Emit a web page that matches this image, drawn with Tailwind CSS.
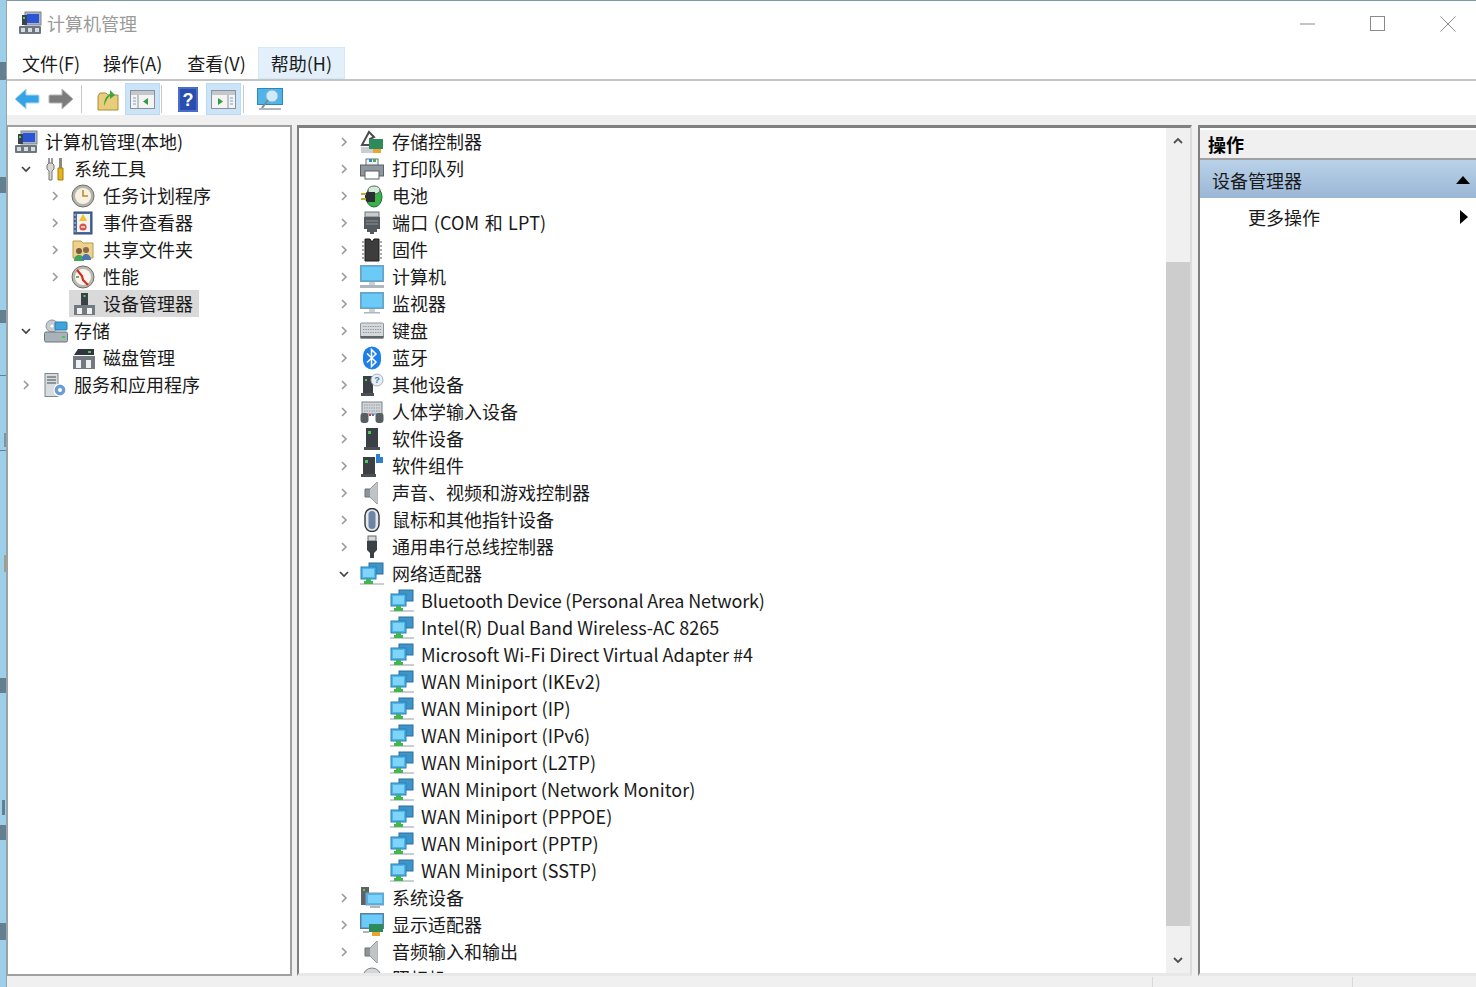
<!DOCTYPE html>
<html lang="zh-CN">
<head>
<meta charset="UTF-8">
<title>计算机管理</title>
<script src="https://cdn.jsdelivr.net/npm/@tailwindcss/browser@4"></script>
</head>
<body class="m-0 overflow-hidden bg-[#f0f0f0] text-[#1a1a1a] font-['Noto_Sans_CJK_SC','Noto_Sans',sans-serif]">

<!-- icon sprite -->
<svg class="hidden" xmlns="http://www.w3.org/2000/svg">
  <symbol id="chev-r" viewBox="0 0 10 12"><path d="M3 2l4 4-4 4" fill="none" stroke="#9a9a9a" stroke-width="1.6"/></symbol>
  <symbol id="chev-d" viewBox="0 0 12 10"><path d="M2 3l4 4 4-4" fill="none" stroke="#404040" stroke-width="1.7"/></symbol>
  <symbol id="net" viewBox="0 0 24 24">
    <rect x="9" y="1" width="14" height="11" fill="#3f94c8" stroke="#2a6f9e"/>
    <rect x="1" y="5" width="15" height="12" fill="#4db4ec" stroke="#2a7fb0"/>
    <rect x="3" y="7" width="11" height="8" fill="#7fd4fa"/>
    <rect x="0" y="21" width="24" height="2" fill="#c9ced2"/>
    <path d="M6 17h5v2h2v3H4v-3h2z" fill="#43b84a"/>
  </symbol>
  <symbol id="monitor" viewBox="0 0 24 24">
    <rect x="0.5" y="0.5" width="23" height="16" fill="#4fb4ea" stroke="#7f9db0"/>
    <rect x="2" y="2" width="20" height="13" fill="#6ccaf6"/>
    <path d="M9 17h6v3H9z" fill="#c8d0d6"/><rect x="4" y="20" width="16" height="1.5" fill="#aeb7bd"/>
  </symbol>
  <symbol id="computer" viewBox="0 0 24 24">
    <rect x="0.5" y="0.5" width="23" height="16" fill="#4fb4ea" stroke="#7f9db0"/>
    <rect x="2" y="2" width="20" height="13" fill="#6ccaf6"/>
    <path d="M9 17h6v3H9z" fill="#c8d0d6"/><rect x="0" y="20" width="24" height="3" fill="#aeb7bd"/>
  </symbol>
  <symbol id="mgmt" viewBox="0 0 24 24">
    <rect x="7" y="1" width="16" height="13" fill="#aab4bd" stroke="#7d8790"/>
    <rect x="9" y="3" width="12" height="9" fill="#2c55d6"/>
    <rect x="4" y="4" width="5" height="10" fill="#3a4450"/><rect x="5" y="6" width="2" height="2" fill="#4fd05a"/>
    <rect x="1" y="15" width="22" height="8" rx="1" fill="#6e7780"/>
    <rect x="3" y="17" width="4" height="4" fill="#d7dce0"/><rect x="10" y="17" width="4" height="4" fill="#d7dce0"/><rect x="17" y="17" width="4" height="4" fill="#d7dce0"/>
  </symbol>
  <symbol id="tools" viewBox="0 0 24 24">
    <path d="M5 1v5l-2 2v4l2 2v9h3V14l2-2V8L8 6V1v5H5z" fill="#d6d6d2" stroke="#777"/>
    <rect x="15" y="1" width="3" height="11" fill="#8a8a84"/>
    <path d="M14 11h5v12h-5z" fill="#e8b41c" stroke="#a67c0c"/>
  </symbol>
  <symbol id="clock" viewBox="0 0 24 24">
    <circle cx="12" cy="12" r="11" fill="#b4b4ac" stroke="#6f6f68"/>
    <circle cx="12" cy="12" r="8" fill="#f6f1e2"/>
    <path d="M12 6v6h5" fill="none" stroke="#c08a2a" stroke-width="1.6"/>
  </symbol>
  <symbol id="event" viewBox="0 0 24 24">
    <rect x="3" y="1" width="18" height="22" fill="#4a6a9c" stroke="#314a74"/>
    <rect x="6" y="3" width="13" height="18" fill="#f4f4f0"/>
    <path d="M12 3l4 7H8z" fill="#eec22a"/>
    <circle cx="12" cy="16" r="3.6" fill="#d9534f"/><rect x="10" y="15.4" width="4" height="1.2" fill="#fff"/>
    <path d="M3 4h2M3 8h2M3 12h2M3 16h2M3 20h2" stroke="#c8d0dc"/>
  </symbol>
  <symbol id="share" viewBox="0 0 24 24">
    <path d="M2 3h8l2 2h10v15H2z" fill="#ecd28c" stroke="#b99a4e"/>
    <circle cx="8" cy="13" r="3" fill="#7a5a3a"/><path d="M3 23c0-4 2-6 5-6s5 2 5 6z" fill="#3fa35a"/>
    <circle cx="15" cy="12" r="3" fill="#8a6a4a"/><path d="M11 22c0-4 2-6 4-6s5 2 5 6z" fill="#4676b6"/>
  </symbol>
  <symbol id="perf" viewBox="0 0 24 24">
    <circle cx="12" cy="12" r="11" fill="#b9b9b2" stroke="#6f6f68"/>
    <circle cx="12" cy="12" r="8" fill="#f8f6ee"/>
    <path d="M6 5l5 6 1 4 5 5" fill="none" stroke="#d62a20" stroke-width="2.2"/>
    <path d="M5 12h3" stroke="#3c9a4c" stroke-width="1.5"/>
  </symbol>
  <symbol id="devmgr" viewBox="0 0 24 24">
    <rect x="9" y="1" width="7" height="12" fill="#3b4148"/><rect x="11.5" y="3" width="2" height="2" fill="#43d053"/>
    <rect x="2" y="13" width="21" height="10" fill="#72797f"/>
    <rect x="5" y="16" width="5" height="6" fill="#eef0f2"/><rect x="15" y="16" width="5" height="6" fill="#eef0f2"/>
  </symbol>
  <symbol id="storage" viewBox="0 0 24 24">
    <circle cx="8" cy="7" r="6" fill="#c6cbcf" stroke="#8e959a"/><circle cx="8" cy="7" r="1.6" fill="#fff"/>
    <rect x="11" y="3" width="12" height="8" rx="1" fill="#3fa4dc" stroke="#2878a8"/>
    <rect x="0.5" y="13" width="23" height="10" rx="1.5" fill="#a9b2b8" stroke="#6d767c"/>
    <rect x="18" y="17" width="3" height="2" fill="#43c84f"/>
  </symbol>
  <symbol id="disk" viewBox="0 0 24 24">
    <path d="M6 3h16v6H2z" fill="#30363c"/><rect x="16" y="5" width="3" height="2" fill="#43d053"/>
    <rect x="1" y="10" width="22" height="13" fill="#72797f"/>
    <rect x="4" y="14" width="5" height="8" fill="#eef0f2"/><rect x="14" y="14" width="5" height="8" fill="#eef0f2"/>
  </symbol>
  <symbol id="services" viewBox="0 0 24 24">
    <rect x="2" y="0.5" width="13" height="23" fill="#d8dcdf" stroke="#7f878c"/>
    <path d="M4 4h9M4 7h9M4 10h9" stroke="#767e84" stroke-width="1.4"/>
    <circle cx="17" cy="17" r="6" fill="#6a9ed4" stroke="#fff" stroke-width="1.2"/><circle cx="17" cy="17" r="2" fill="#fff"/>
  </symbol>
  <symbol id="storctl" viewBox="0 0 24 24">
    <path d="M2 15L9 2l5 5-4 2 1 6z" fill="none" stroke="#4d4d4d" stroke-width="2"/>
    <rect x="1" y="17" width="14" height="6" fill="#c9ced2"/>
    <rect x="9" y="9" width="14" height="10" fill="#2e8a5a"/><rect x="13" y="19" width="8" height="4" fill="#e8a62c"/>
  </symbol>
  <symbol id="printer" viewBox="0 0 24 24">
    <rect x="6" y="2" width="12" height="7" fill="#f3f3f3" stroke="#6a7177"/>
    <rect x="9" y="2" width="3" height="3" fill="#2f86d8"/><rect x="13" y="2" width="3" height="3" fill="#45b24d"/>
    <rect x="0.5" y="8" width="23" height="11" fill="#8e979d" stroke="#5b6369"/>
    <rect x="5" y="14" width="14" height="8" fill="#fff" stroke="#5b6369"/>
  </symbol>
  <symbol id="battery" viewBox="0 0 24 24">
    <ellipse cx="14" cy="13" rx="8" ry="10" fill="#38b24a" stroke="#1e6b2c"/>
    <ellipse cx="14" cy="6" rx="6" ry="4" fill="#d5e9d8" stroke="#53705a"/>
    <path d="M9 8h6v10H9c-3 0-4-2-4-5s1-5 4-5z" fill="#2a2f33"/>
    <path d="M1 10h5M1 15h5" stroke="#c8a82a" stroke-width="2"/>
  </symbol>
  <symbol id="port" viewBox="0 0 24 24">
    <rect x="5" y="1" width="14" height="5" fill="#c6cbcf" stroke="#6e7479"/>
    <path d="M4 6h16v12h-3v3h-3v2h-4v-2H7v-3H4z" fill="#545a5f"/>
    <path d="M6 10h12M6 13h12" stroke="#8c9398"/>
  </symbol>
  <symbol id="chip" viewBox="0 0 24 24">
    <path d="M5 1h5l2 3 2-3h5v22H5z" fill="#3d3d3d" stroke="#1d1d1d"/>
    <path d="M2 4h3M2 8h3M2 12h3M2 16h3M2 20h3M19 4h3M19 8h3M19 12h3M19 16h3M19 20h3" stroke="#8f8f8f" stroke-width="1.6"/>
  </symbol>
  <symbol id="keyboard" viewBox="0 0 24 24">
    <rect x="0.5" y="4" width="23" height="15" rx="1" fill="#d5d9dc" stroke="#8d959a"/>
    <path d="M3 7.5h18M3 10.5h18M3 13.5h18" stroke="#8f979d" stroke-dasharray="1.4 1"/>
    <rect x="0.5" y="17" width="23" height="2.5" fill="#5d6468"/>
  </symbol>
  <symbol id="bt" viewBox="0 0 24 24">
    <rect x="3" y="0.5" width="18" height="23" rx="9" fill="#1e7fe8"/>
    <path d="M7 7.5l9 8.5-4.5 4.5v-17L16 8l-9 8.5" fill="none" stroke="#fff" stroke-width="1.5"/>
  </symbol>
  <symbol id="other" viewBox="0 0 24 24">
    <rect x="3" y="3" width="10" height="17" fill="#3a4046"/><rect x="5" y="6" width="2" height="2" fill="#43d053"/>
    <rect x="1" y="20" width="13" height="3" fill="#4a5056"/>
    <circle cx="17" cy="7" r="6" fill="#e7eef4" stroke="#a7b2ba"/>
    <text x="17" y="10" font-size="9" font-weight="700" text-anchor="middle" fill="#3d7cc0" font-family="Liberation Sans">?</text>
  </symbol>
  <symbol id="hid" viewBox="0 0 24 24">
    <rect x="2" y="2" width="20" height="12" fill="#d0d5d9" stroke="#7c848a"/>
    <path d="M4 5h16M4 8h16M4 11h16" stroke="#8f979d" stroke-dasharray="1.4 1"/>
    <rect x="0.5" y="13" width="8" height="10" rx="3" fill="#565d63"/>
    <rect x="15.5" y="13" width="8" height="10" rx="3" fill="#565d63"/>
    <rect x="9" y="14" width="2" height="2" fill="#d8382e"/><rect x="12" y="14" width="2" height="2" fill="#3a7fd0"/>
  </symbol>
  <symbol id="softdev" viewBox="0 0 24 24">
    <rect x="6" y="1" width="12" height="19" fill="#3a4046"/><rect x="8" y="4" width="3" height="3" fill="#43d053"/>
    <rect x="4" y="20" width="16" height="3" fill="#4a5056"/>
  </symbol>
  <symbol id="softcomp" viewBox="0 0 24 24">
    <rect x="3" y="3" width="12" height="17" fill="#3a4046"/><rect x="5" y="6" width="3" height="3" fill="#43d053"/>
    <rect x="1" y="20" width="15" height="3" fill="#4a5056"/>
    <path d="M16 0h4v3h3v6h-7z" fill="#2f7fd0"/>
  </symbol>
  <symbol id="speaker" viewBox="0 0 24 24">
    <path d="M5 8h5l7-7v22l-7-7H5z" fill="#8f9498" stroke="#6b7175"/>
    <path d="M10 8l7-7v22l-7-7z" fill="#c0c4c7"/>
  </symbol>
  <symbol id="mouse" viewBox="0 0 24 24">
    <rect x="5" y="0.5" width="14" height="23" rx="7" fill="#e6e8ea" stroke="#2f3438" stroke-width="1.4"/>
    <rect x="8.5" y="3" width="7" height="18" rx="3.5" fill="#6d84a4"/>
  </symbol>
  <symbol id="usb" viewBox="0 0 24 24">
    <rect x="8" y="1" width="8" height="5" fill="#d5d8da" stroke="#666"/>
    <path d="M7 6h10v9l-3 3v5h-4v-5l-3-3z" fill="#3c4145"/>
  </symbol>
  <symbol id="system" viewBox="0 0 24 24">
    <rect x="1" y="1" width="8" height="18" fill="#5c6268"/><rect x="3" y="3" width="2" height="2" fill="#43d053"/>
    <rect x="6" y="7" width="18" height="12" fill="#4fb4ea" stroke="#7f9db0"/>
    <rect x="8" y="9" width="14" height="8" fill="#7ad2f8"/>
    <rect x="10" y="20" width="10" height="2" fill="#aeb7bd"/>
  </symbol>
  <symbol id="display" viewBox="0 0 24 24">
    <rect x="0.5" y="0.5" width="23" height="15" fill="#4fa8de" stroke="#5d7f95"/>
    <rect x="2" y="2" width="20" height="12" fill="#6ccaf6"/>
    <rect x="9" y="11" width="14" height="8" fill="#2e8a5a"/><rect x="12" y="19" width="8" height="4" fill="#e8a62c"/>
    <rect x="3" y="18" width="6" height="2" fill="#aeb7bd"/>
  </symbol>
  <symbol id="camera" viewBox="0 0 24 24">
    <circle cx="12" cy="10" r="9" fill="#d4d7d9" stroke="#7d8488"/>
    <circle cx="12" cy="10" r="4" fill="#4a5056"/>
  </symbol>
</svg>

<div class="relative flex h-[987px] w-[1476px] overflow-hidden">
  <!-- desktop peeking out on the left -->
  <div class="relative w-[7px] shrink-0 border-r border-[#8ea6b4] bg-[#9dcfe8]">
    <span class="absolute left-0 top-[62px] h-[18px] w-[6px] bg-[#3c4a55]/60"></span>
    <span class="absolute left-0 top-[177px] h-[16px] w-[6px] bg-[#3c4a55]/60"></span>
    <span class="absolute left-0 top-[310px] h-[13px] w-[6px] bg-[#3c4a55]/60"></span>
    <span class="absolute left-0 top-[375px] h-[1px] w-[6px] bg-[#3c4a55]/60"></span>
    <span class="absolute left-[4px] top-[433px] h-[14px] w-[2px] bg-[#6a7a88]/70"></span>
    <span class="absolute left-0 top-[450px] h-[1px] w-[6px] bg-[#3c4a55]/60"></span>
    <span class="absolute left-[4px] top-[555px] h-[17px] w-[2px] bg-[#a08a5a]/70"></span>
    <span class="absolute left-0 top-[678px] h-[15px] w-[6px] bg-[#3c4a55]/60"></span>
    <span class="absolute left-[2px] top-[800px] h-[15px] w-[3px] bg-[#3c4a55]/60"></span>
    <span class="absolute left-0 top-[825px] h-[15px] w-[6px] bg-[#3c4a55]/60"></span>
    <span class="absolute left-0 top-[923px] h-[17px] w-[6px] bg-[#3c4a55]/60"></span>
  </div>

  <div class="flex min-w-0 flex-1 flex-col border-t border-[#7b9aa5] bg-[#f0f0f0]">
    <!-- title bar -->
    <div class="flex h-[46px] shrink-0 items-center bg-white pl-[11px]">
      <svg class="mb-[2px] h-[24px] w-[24px]"><use href="#mgmt"/></svg>
      <span class="mb-[3px] ml-[5px] text-[18px] leading-none text-[#9a9a9a]">计算机管理</span>
      <div class="ml-auto flex items-center">
        <svg class="h-[16px] w-[16px]" viewBox="0 0 16 16"><path d="M0 8h15" stroke="#8a8a8a"/></svg>
        <svg class="ml-[54px] h-[16px] w-[16px]" viewBox="0 0 16 16"><rect x="0.5" y="0.5" width="14" height="14" fill="none" stroke="#8a8a8a"/></svg>
        <svg class="ml-[54px] mr-[20px] h-[16px] w-[16px]" viewBox="0 0 16 16"><path d="M0.5 0.5l15 15M15.5 0.5l-15 15" stroke="#8a8a8a"/></svg>
      </div>
    </div>
    <!-- menu bar -->
    <div class="flex h-[34px] shrink-0 items-stretch border-b-2 border-[#c4c4c4] bg-white pl-[3px] text-[18px]">
      <span class="flex items-center px-[12px]">文件(F)</span>
      <span class="flex items-center pl-[11px] pr-[13px]">操作(A)</span>
      <span class="flex items-center px-[12px]">查看(V)</span>
      <span class="flex items-center border border-[#d5e8f8] bg-[#e3f0fb] px-[12px]">帮助(H)</span>
    </div>
    <!-- toolbar -->
    <div class="flex h-[34px] shrink-0 items-center bg-white pl-[7px] pt-[2px]">
      <svg class="h-[26px] w-[26px]" viewBox="0 0 26 26"><path d="M1 13L12 3v6h12c1 0 1 1 1 1v6s0 1-1 1H12v6z" fill="#36a3e6" stroke="#a9d6f2"/></svg>
      <svg class="ml-[8px] h-[26px] w-[26px]" viewBox="0 0 26 26"><path d="M25 13L14 3v6H2c-1 0-1 1-1 1v6s0 1 1 1h12v6z" fill="#7c7c7c" stroke="#b5b5b5"/></svg>
      <span class="ml-[7px] h-[28px] w-[1px] bg-[#c8c8c8]"></span>
      <svg class="ml-[15px] h-[24px] w-[22px]" viewBox="0 0 22 24"><path d="M1 9l2-3h6l2 2h10v15H1z" fill="#e8cd7a" stroke="#a88c3c"/><path d="M7 19c0-6 2-10 6-12V3l5 5-5 4V9c-2 1-4 5-6 10z" fill="#3da73f"/></svg>
      <span class="ml-[6px] flex h-[32px] w-[35px] items-center justify-center border border-[#b8dcf8] bg-[#cce4f7]">
        <svg class="h-[19px] w-[25px]" viewBox="0 0 25 19"><rect x="0.5" y="0.5" width="24" height="18" fill="#f4f4f4" stroke="#8a9298"/><rect x="1" y="1" width="23" height="4" fill="#c2c8cc"/><path d="M8 5v13" stroke="#8a9298"/><path d="M3 8h3M3 11h3M3 14h3" stroke="#7a9ccc"/><path d="M18 8v7l-5-3.5z" fill="#2f9f3f"/></svg>
      </span>
      <span class="ml-[1px] h-[28px] w-[1px] bg-[#c8c8c8]"></span>
      <svg class="ml-[16px] h-[25px] w-[20px]" viewBox="0 0 20 25"><rect width="20" height="25" fill="#2a4db0"/><rect x="1" y="1" width="18" height="23" fill="none" stroke="#6e8ce0"/><text x="10" y="19" text-anchor="middle" font-size="18" font-weight="700" fill="#fff" font-family="Liberation Sans">?</text></svg>
      <span class="ml-[8px] flex h-[32px] w-[35px] items-center justify-center border border-[#b8dcf8] bg-[#cce4f7]">
        <svg class="h-[19px] w-[25px]" viewBox="0 0 25 19"><rect x="0.5" y="0.5" width="24" height="18" fill="#f4f4f4" stroke="#8a9298"/><rect x="1" y="1" width="23" height="4" fill="#c2c8cc"/><path d="M17 5v13" stroke="#8a9298"/><path d="M19 8h3M19 11h3M19 14h3" stroke="#7a9ccc"/><path d="M7 8v7l5-3.5z" fill="#2f9f3f"/></svg>
      </span>
      <span class="ml-[2px] h-[28px] w-[1px] bg-[#c8c8c8]"></span>
      <svg class="ml-[13px] h-[23px] w-[26px]" viewBox="0 0 26 23"><rect x="0.5" y="0.5" width="25" height="16" fill="#4fb4ea" stroke="#2f86b8"/><circle cx="15" cy="8" r="6" fill="#cfeaf8" stroke="#8fb4c8"/><path d="M11 12l-6 8" stroke="#7a8a94" stroke-width="2"/><rect x="2" y="20" width="22" height="2" fill="#aeb7bd"/></svg>
    </div>

    <!-- panes -->
    <div class="mt-[10px] flex h-[851px] shrink-0 items-stretch">
      <!-- left tree -->
      <div class="w-[285px] shrink-0 overflow-hidden border-t-2 border-r-2 border-b-2 border-l border-[#a0a0a0] bg-white pt-[1px] text-[18px]">
        <div class="flex h-[27px] items-center pl-[6px]"><svg class="h-[24px] w-[24px]"><use href="#mgmt"/></svg><span class="ml-[7px]">计算机管理(本地)</span></div>
        <div class="flex h-[27px] items-center pl-[12px]"><svg class="h-[10px] w-[12px]"><use href="#chev-d"/></svg><svg class="ml-[12px] h-[24px] w-[24px]"><use href="#tools"/></svg><span class="ml-[6px]">系统工具</span></div>
        <div class="flex h-[27px] items-center pl-[42px]"><svg class="h-[12px] w-[10px]"><use href="#chev-r"/></svg><svg class="ml-[11px] h-[24px] w-[24px]"><use href="#clock"/></svg><span class="ml-[8px]">任务计划程序</span></div>
        <div class="flex h-[27px] items-center pl-[42px]"><svg class="h-[12px] w-[10px]"><use href="#chev-r"/></svg><svg class="ml-[11px] h-[24px] w-[24px]"><use href="#event"/></svg><span class="ml-[8px]">事件查看器</span></div>
        <div class="flex h-[27px] items-center pl-[42px]"><svg class="h-[12px] w-[10px]"><use href="#chev-r"/></svg><svg class="ml-[11px] h-[24px] w-[24px]"><use href="#share"/></svg><span class="ml-[8px]">共享文件夹</span></div>
        <div class="flex h-[27px] items-center pl-[42px]"><svg class="h-[12px] w-[10px]"><use href="#chev-r"/></svg><svg class="ml-[11px] h-[24px] w-[24px]"><use href="#perf"/></svg><span class="ml-[8px]">性能</span></div>
        <div class="flex h-[27px] items-center pl-[61px]"><span class="flex h-[27px] w-[130px] items-center bg-[#d9d9d9] pl-[3px]"><svg class="h-[24px] w-[24px]"><use href="#devmgr"/></svg><span class="ml-[7px]">设备管理器</span></span></div>
        <div class="flex h-[27px] items-center pl-[12px]"><svg class="h-[10px] w-[12px]"><use href="#chev-d"/></svg><svg class="ml-[12px] h-[24px] w-[24px]"><use href="#storage"/></svg><span class="ml-[6px]">存储</span></div>
        <div class="flex h-[27px] items-center pl-[64px]"><svg class="h-[24px] w-[24px]"><use href="#disk"/></svg><span class="ml-[7px]">磁盘管理</span></div>
        <div class="flex h-[27px] items-center pl-[13px]"><svg class="h-[12px] w-[10px]"><use href="#chev-r"/></svg><svg class="ml-[12px] h-[24px] w-[24px]"><use href="#services"/></svg><span class="ml-[7px]">服务和应用程序</span></div>
      </div>

      <!-- device tree -->
      <div class="ml-[5px] flex w-[895px] shrink-0 overflow-hidden border-t-[3px] border-l-2 border-[#808080] border-r-[#dcdcdc] border-b-[#e8e8e8] border-r-2 border-b-[3px]">
        <div class="min-w-0 flex-1 overflow-hidden bg-white text-[18px]">
          <div class="flex h-[27px] items-center pl-[40px]"><svg class="h-[12px] w-[10px]"><use href="#chev-r"/></svg><svg class="ml-[11px] h-[24px] w-[24px]"><use href="#storctl"/></svg><span class="ml-[8px]">存储控制器</span></div>
          <div class="flex h-[27px] items-center pl-[40px]"><svg class="h-[12px] w-[10px]"><use href="#chev-r"/></svg><svg class="ml-[11px] h-[24px] w-[24px]"><use href="#printer"/></svg><span class="ml-[8px]">打印队列</span></div>
          <div class="flex h-[27px] items-center pl-[40px]"><svg class="h-[12px] w-[10px]"><use href="#chev-r"/></svg><svg class="ml-[11px] h-[24px] w-[24px]"><use href="#battery"/></svg><span class="ml-[8px]">电池</span></div>
          <div class="flex h-[27px] items-center pl-[40px]"><svg class="h-[12px] w-[10px]"><use href="#chev-r"/></svg><svg class="ml-[11px] h-[24px] w-[24px]"><use href="#port"/></svg><span class="ml-[8px] [word-spacing:1px] tracking-[0.2px]">端口 (COM 和 LPT)</span></div>
          <div class="flex h-[27px] items-center pl-[40px]"><svg class="h-[12px] w-[10px]"><use href="#chev-r"/></svg><svg class="ml-[11px] h-[24px] w-[24px]"><use href="#chip"/></svg><span class="ml-[8px]">固件</span></div>
          <div class="flex h-[27px] items-center pl-[40px]"><svg class="h-[12px] w-[10px]"><use href="#chev-r"/></svg><svg class="ml-[11px] h-[24px] w-[24px]"><use href="#computer"/></svg><span class="ml-[8px]">计算机</span></div>
          <div class="flex h-[27px] items-center pl-[40px]"><svg class="h-[12px] w-[10px]"><use href="#chev-r"/></svg><svg class="ml-[11px] h-[24px] w-[24px]"><use href="#monitor"/></svg><span class="ml-[8px]">监视器</span></div>
          <div class="flex h-[27px] items-center pl-[40px]"><svg class="h-[12px] w-[10px]"><use href="#chev-r"/></svg><svg class="ml-[11px] h-[24px] w-[24px]"><use href="#keyboard"/></svg><span class="ml-[8px]">键盘</span></div>
          <div class="flex h-[27px] items-center pl-[40px]"><svg class="h-[12px] w-[10px]"><use href="#chev-r"/></svg><svg class="ml-[11px] h-[24px] w-[24px]"><use href="#bt"/></svg><span class="ml-[8px]">蓝牙</span></div>
          <div class="flex h-[27px] items-center pl-[40px]"><svg class="h-[12px] w-[10px]"><use href="#chev-r"/></svg><svg class="ml-[11px] h-[24px] w-[24px]"><use href="#other"/></svg><span class="ml-[8px]">其他设备</span></div>
          <div class="flex h-[27px] items-center pl-[40px]"><svg class="h-[12px] w-[10px]"><use href="#chev-r"/></svg><svg class="ml-[11px] h-[24px] w-[24px]"><use href="#hid"/></svg><span class="ml-[8px]">人体学输入设备</span></div>
          <div class="flex h-[27px] items-center pl-[40px]"><svg class="h-[12px] w-[10px]"><use href="#chev-r"/></svg><svg class="ml-[11px] h-[24px] w-[24px]"><use href="#softdev"/></svg><span class="ml-[8px]">软件设备</span></div>
          <div class="flex h-[27px] items-center pl-[40px]"><svg class="h-[12px] w-[10px]"><use href="#chev-r"/></svg><svg class="ml-[11px] h-[24px] w-[24px]"><use href="#softcomp"/></svg><span class="ml-[8px]">软件组件</span></div>
          <div class="flex h-[27px] items-center pl-[40px]"><svg class="h-[12px] w-[10px]"><use href="#chev-r"/></svg><svg class="ml-[11px] h-[24px] w-[24px]"><use href="#speaker"/></svg><span class="ml-[8px]">声音、视频和游戏控制器</span></div>
          <div class="flex h-[27px] items-center pl-[40px]"><svg class="h-[12px] w-[10px]"><use href="#chev-r"/></svg><svg class="ml-[11px] h-[24px] w-[24px]"><use href="#mouse"/></svg><span class="ml-[8px]">鼠标和其他指针设备</span></div>
          <div class="flex h-[27px] items-center pl-[40px]"><svg class="h-[12px] w-[10px]"><use href="#chev-r"/></svg><svg class="ml-[11px] h-[24px] w-[24px]"><use href="#usb"/></svg><span class="ml-[8px]">通用串行总线控制器</span></div>
          <div class="flex h-[27px] items-center pl-[39px]"><svg class="h-[10px] w-[12px]"><use href="#chev-d"/></svg><svg class="ml-[10px] h-[24px] w-[24px]"><use href="#net"/></svg><span class="ml-[8px]">网络适配器</span></div>
          <div class="flex h-[27px] items-center pl-[91px]"><svg class="h-[24px] w-[24px]"><use href="#net"/></svg><span class="ml-[7px] tracking-[-0.15px]">Bluetooth Device (Personal Area Network)</span></div>
          <div class="flex h-[27px] items-center pl-[91px]"><svg class="h-[24px] w-[24px]"><use href="#net"/></svg><span class="ml-[7px]">Intel(R) Dual Band Wireless-AC 8265</span></div>
          <div class="flex h-[27px] items-center pl-[91px]"><svg class="h-[24px] w-[24px]"><use href="#net"/></svg><span class="ml-[7px]">Microsoft Wi-Fi Direct Virtual Adapter #4</span></div>
          <div class="flex h-[27px] items-center pl-[91px]"><svg class="h-[24px] w-[24px]"><use href="#net"/></svg><span class="ml-[7px] tracking-[0.1px]">WAN Miniport (IKEv2)</span></div>
          <div class="flex h-[27px] items-center pl-[91px]"><svg class="h-[24px] w-[24px]"><use href="#net"/></svg><span class="ml-[7px] tracking-[0.1px]">WAN Miniport (IP)</span></div>
          <div class="flex h-[27px] items-center pl-[91px]"><svg class="h-[24px] w-[24px]"><use href="#net"/></svg><span class="ml-[7px] tracking-[0.1px]">WAN Miniport (IPv6)</span></div>
          <div class="flex h-[27px] items-center pl-[91px]"><svg class="h-[24px] w-[24px]"><use href="#net"/></svg><span class="ml-[7px] tracking-[0.1px]">WAN Miniport (L2TP)</span></div>
          <div class="flex h-[27px] items-center pl-[91px]"><svg class="h-[24px] w-[24px]"><use href="#net"/></svg><span class="ml-[7px] tracking-[0.05px]">WAN Miniport (Network Monitor)</span></div>
          <div class="flex h-[27px] items-center pl-[91px]"><svg class="h-[24px] w-[24px]"><use href="#net"/></svg><span class="ml-[7px] tracking-[0.1px]">WAN Miniport (PPPOE)</span></div>
          <div class="flex h-[27px] items-center pl-[91px]"><svg class="h-[24px] w-[24px]"><use href="#net"/></svg><span class="ml-[7px] tracking-[0.1px]">WAN Miniport (PPTP)</span></div>
          <div class="flex h-[27px] items-center pl-[91px]"><svg class="h-[24px] w-[24px]"><use href="#net"/></svg><span class="ml-[7px] tracking-[0.1px]">WAN Miniport (SSTP)</span></div>
          <div class="flex h-[27px] items-center pl-[40px]"><svg class="h-[12px] w-[10px]"><use href="#chev-r"/></svg><svg class="ml-[11px] h-[24px] w-[24px]"><use href="#system"/></svg><span class="ml-[8px]">系统设备</span></div>
          <div class="flex h-[27px] items-center pl-[40px]"><svg class="h-[12px] w-[10px]"><use href="#chev-r"/></svg><svg class="ml-[11px] h-[24px] w-[24px]"><use href="#display"/></svg><span class="ml-[8px]">显示适配器</span></div>
          <div class="flex h-[27px] items-center pl-[40px]"><svg class="h-[12px] w-[10px]"><use href="#chev-r"/></svg><svg class="ml-[11px] h-[24px] w-[24px]"><use href="#speaker"/></svg><span class="ml-[8px]">音频输入和输出</span></div>
          <div class="flex h-[27px] items-center pl-[40px]"><svg class="h-[12px] w-[10px]"><use href="#chev-r"/></svg><svg class="ml-[11px] h-[24px] w-[24px]"><use href="#camera"/></svg><span class="ml-[8px]">照相机</span></div>
        </div>
        <!-- scrollbar -->
        <div class="relative w-[24px] shrink-0 bg-[#f0f0f0]">
          <svg class="absolute left-[6px] top-[9px] h-[8px] w-[12px]" viewBox="0 0 12 8"><path d="M2 6l4-4 4 4" fill="none" stroke="#505050" stroke-width="1.8"/></svg>
          <div class="absolute inset-x-0 top-[134px] h-[664px] bg-[#cdcdcd]"></div>
          <svg class="absolute left-[6px] top-[828px] h-[8px] w-[12px]" viewBox="0 0 12 8"><path d="M2 2l4 4 4-4" fill="none" stroke="#505050" stroke-width="1.8"/></svg>
        </div>
      </div>

      <!-- actions -->
      <div class="ml-[6px] min-w-0 flex-1 overflow-hidden border-t-[3px] border-l-2 border-[#808080] border-b-[#e8e8e8] border-b-[3px] bg-white">
        <div class="flex h-[32px] items-center border-t-2 border-b-2 border-t-white border-b-[#a0a0a0] bg-[#f0f0f0] pl-[8px] pt-[1px] text-[18px] font-bold text-black">操作</div>
        <div class="flex h-[38px] items-center justify-between bg-gradient-to-b from-[#bad2e9] to-[#9ab7d6] pl-[12px] pr-[6px] pt-[2px] text-[18px]">
          <span>设备管理器</span>
          <svg class="h-[8px] w-[14px]" viewBox="0 0 14 8"><path d="M7 0l7 8H0z" fill="#000"/></svg>
        </div>
        <div class="flex h-[38px] items-center justify-between pl-[48px] pr-[8px] text-[18px]">
          <span>更多操作</span>
          <svg class="h-[14px] w-[8px]" viewBox="0 0 8 14"><path d="M0 0l8 7-8 7z" fill="#000"/></svg>
        </div>
      </div>
    </div>

    <!-- status bar -->
    <div class="relative flex-1 bg-[#f0f0f0]">
      <span class="absolute bottom-0 left-[1145px] top-[1px] w-[1px] bg-[#d9d9d9]"></span>
      <span class="absolute bottom-0 left-[1345px] top-[1px] w-[1px] bg-[#d9d9d9]"></span>
    </div>
  </div>
</div>
</body>
</html>
